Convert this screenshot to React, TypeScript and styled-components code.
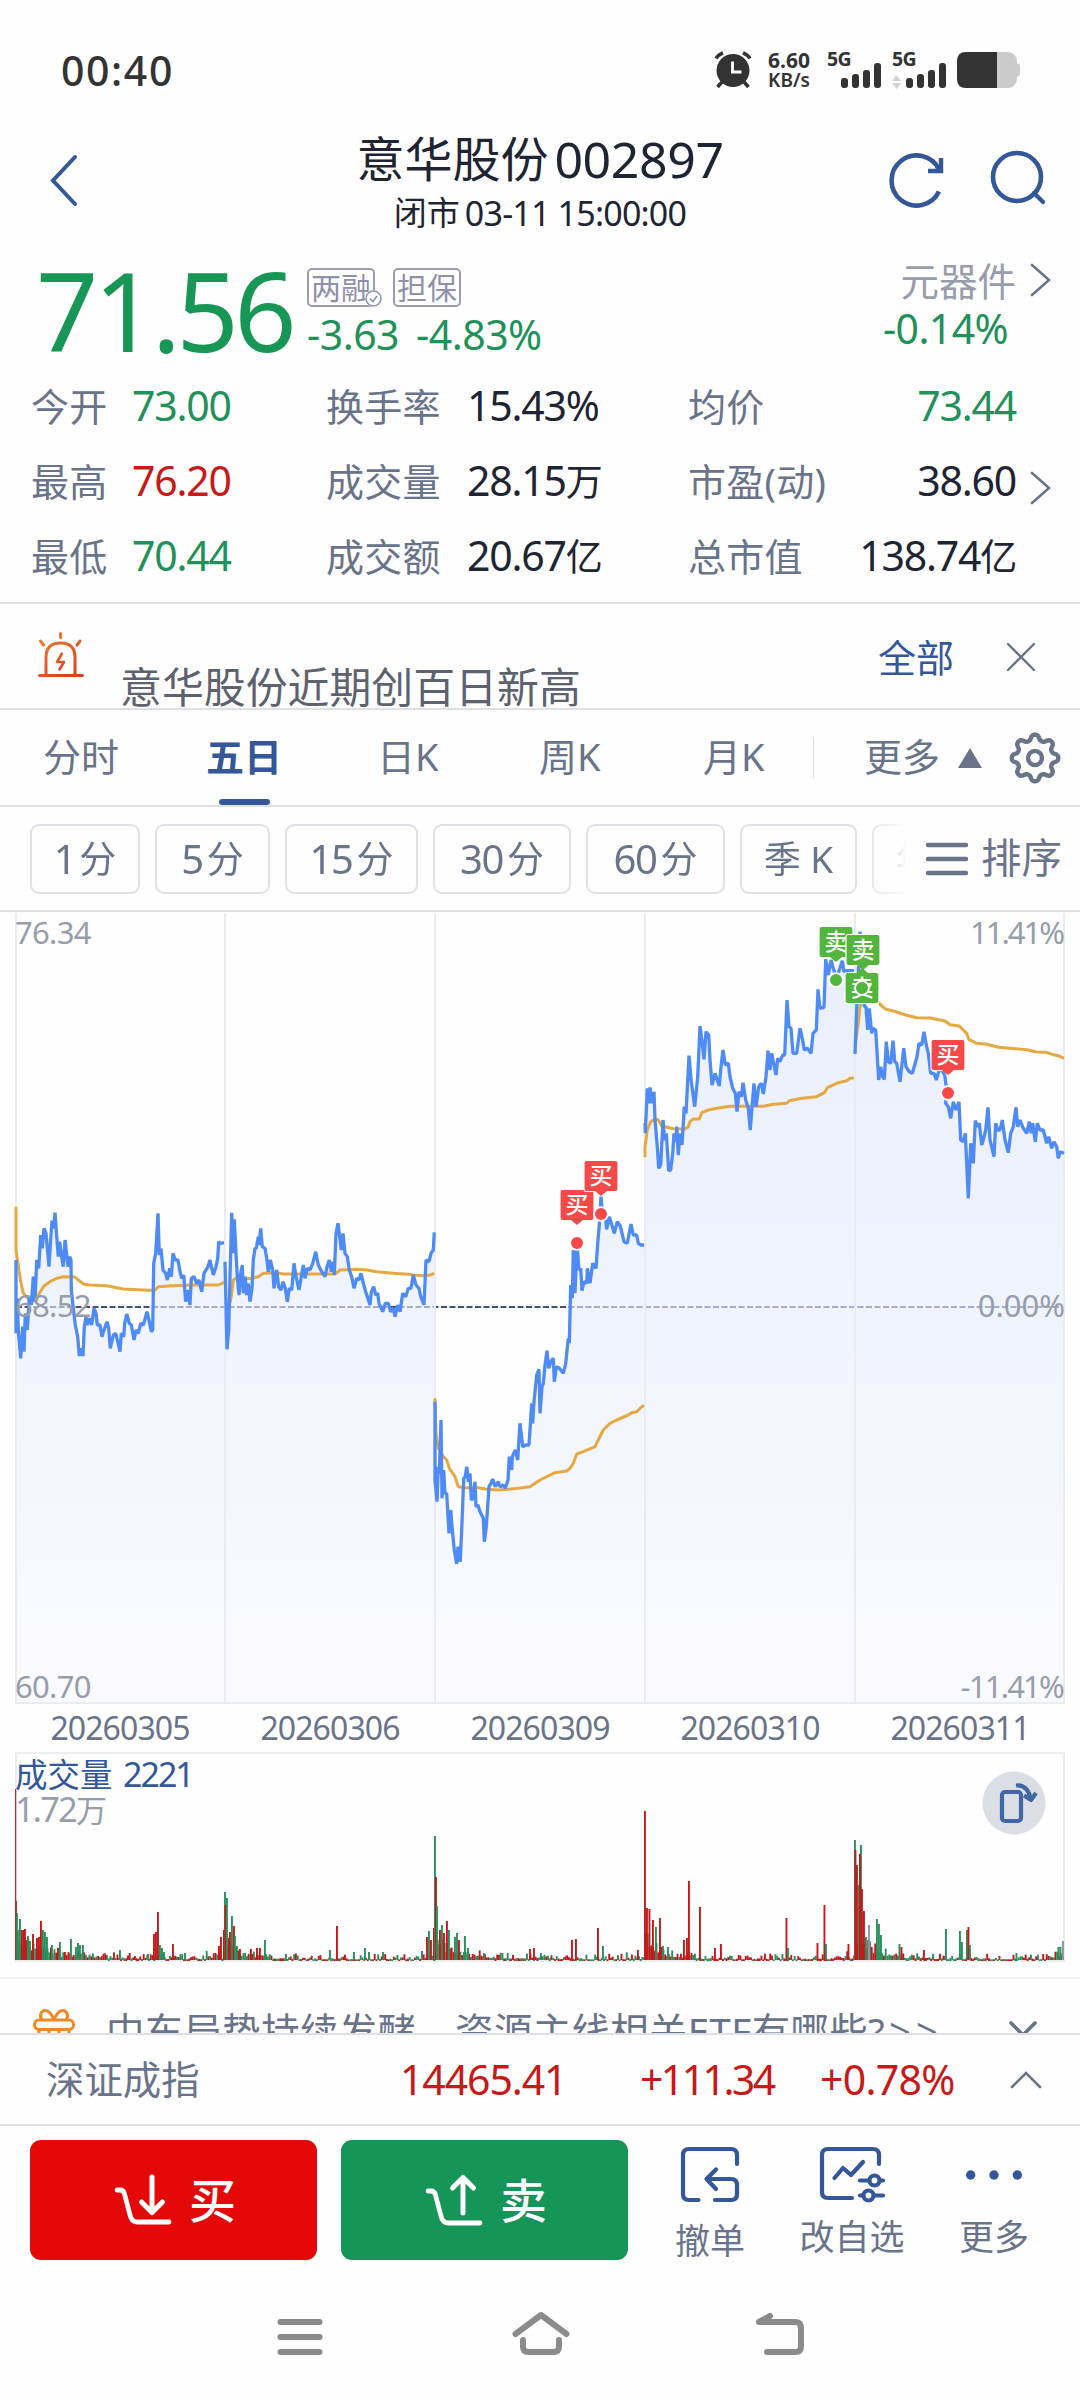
import React from "react";
import styled, { createGlobalStyle } from "styled-components";

const c = {
  ink: "#1f2433",
  slate: "#69738a",
  mute: "#979dab",
  blue: "#335798",
  green: "#21915a",
  red: "#c91818",
  line: "#dfe0e3",
  status: "#333333",
};

const Global = createGlobalStyle`
  * { box-sizing: border-box; }
  body { margin: 0; background: #fefefe; }
  svg { display: block; flex: none; overflow: visible; }
`;

const Screen = styled.main`
  width: 1080px;
  height: 2400px;
  display: flex;
  flex-direction: column;
  overflow: hidden;
  background: #fefefe;
  color: ${c.ink};
  font-family: "Noto Sans", "Noto Sans CJK SC", sans-serif;
  line-height: 1;
  white-space: nowrap;
`;

/* ---------- status bar ---------- */
const StatusBar = styled.header`
  height: 120px;
  padding: 20px 60px 0 61px;
  display: flex;
  align-items: center;
  justify-content: space-between;
  color: ${c.status};
`;
const Clock = styled.span`
  font-size: 41px;
  font-weight: 500;
  letter-spacing: 1.6px;
`;
const StatusIcons = styled.div`
  display: flex;
  align-items: center;
`;
const Speed = styled.div`
  width: 48px;
  margin: 0 14px 0 13px;
  text-align: center;
  font-weight: 700;
  font-size: 21px;
  line-height: 21px;
`;
const SpeedUnit = styled.div`
  font-size: 19px;
  line-height: 19px;
  font-weight: 600;
`;

/* ---------- title bar ---------- */
const TitleBar = styled.div`
  height: 130px;
  padding: 0 33px 0 49px;
  display: grid;
  grid-template-columns: 142px 1fr 158px;
`;
const BackSlot = styled.div`
  padding-top: 35px;
`;
const Titles = styled.div`
  display: flex;
  flex-direction: column;
  align-items: center;
  padding: 11px 0 0 0;
`;
const Title = styled.h1`
  margin: 0;
  height: 56px;
  font-size: 48px;
  line-height: 56px;
  font-weight: 400;
  display: flex;
  gap: 6px;
`;
const Subtitle = styled.div`
  height: 52px;
  font-size: 33px;
  line-height: 52px;
  display: flex;
  gap: 5px;
`;
const Latin = styled.span<{ $size: number; $ls?: number }>`
  font-size: ${(p) => p.$size}px;
  letter-spacing: ${(p) => p.$ls ?? 0}px;
`;
const HeadActions = styled.div`
  display: flex;
  justify-content: space-between;
  padding-top: 30px;
`;

/* ---------- quote ---------- */
const Quote = styled.section`
  height: 118px;
  padding: 0 28px 0 36px;
  display: grid;
  grid-template-columns: 271px 1fr auto;
`;
const Price = styled.div`
  color: #179656;
  font-size: 109px;
  line-height: 119px;
  font-weight: 400;
  letter-spacing: -4.5px;
`;
const Change = styled.div`
  display: flex;
  flex-direction: column;
  padding-top: 18px;
`;
const Badges = styled.div`
  display: flex;
  gap: 18px;
`;
const Badge = styled.span`
  position: relative;
  height: 39px;
  width: 68px;
  border: 2px solid #9a9cb4;
  border-radius: 5px;
  color: #8f91ab;
  font-size: 30px;
  line-height: 35px;
  text-align: center;
`;
const BadgeTick = styled.span`
  position: absolute;
  right: -9px;
  bottom: -2px;
  border-radius: 50%;
  background: #fefefe;
`;
const Deltas = styled.div`
  display: flex;
  gap: 17px;
  margin-top: 6px;
  font-size: 41px;
  line-height: 42px;
  color: ${c.green};
  letter-spacing: -0.5px;
`;
const Sector = styled.div`
  display: flex;
  gap: 14px;
  padding-top: 10px;
`;
const SectorText = styled.div`
  display: flex;
  flex-direction: column;
  align-items: flex-end;
  color: ${c.mute};
  font-size: 38.5px;
  line-height: 42px;
`;
const SectorDelta = styled.div`
  margin: 5px 8px 0 0;
  font-size: 41px;
  line-height: 42px;
  letter-spacing: -0.6px;
  color: ${c.green};
`;
const SectorChevron = styled.div`
  padding-top: 3px;
`;

/* ---------- stats ---------- */
const Stats = styled.section`
  height: 236px;
  padding: 0 28px 0 31px;
  display: grid;
  grid-template-columns: 101px 194px 141px 221px 150px 1fr 36px;
  grid-template-rows: repeat(3, 75px);
  align-items: center;
  border-bottom: 2px solid ${c.line};
`;
const StatLabel = styled.span`
  color: ${c.slate};
  font-size: 38px;
  letter-spacing: 0.3px;
`;
const StatValue = styled.span<{ $color?: string; $end?: boolean }>`
  color: ${(p) => p.$color ?? c.ink};
  font-size: 41px;
  letter-spacing: -1.2px;
  text-align: ${(p) => (p.$end ? "right" : "left")};
`;
const Unit = styled.span`
  font-size: 37px;
`;
const StatTail = styled.span`
  display: flex;
  justify-content: flex-end;
  padding-top: 15px;
`;

/* ---------- alert strip ---------- */
const Alert = styled.section`
  height: 106px;
  padding: 0 44px 0 36px;
  display: flex;
  border-bottom: 2px solid ${c.line};
`;
const AlertIcon = styled.div`
  padding-top: 27px;
  width: 84px;
`;
const AlertText = styled.div`
  flex: 1;
  padding-top: 61px;
  font-size: 41.9px;
  line-height: 44px;
  color: #5d626e;
  overflow: hidden;
`;
const AlertAll = styled.div`
  padding-top: 31px;
  width: 128px;
  font-size: 38px;
  line-height: 44px;
  color: ${c.blue};
`;
const AlertClose = styled.div`
  padding-top: 38px;
`;

/* ---------- tabs ---------- */
const Tabs = styled.nav`
  height: 97px;
  padding-left: 43px;
  display: grid;
  grid-template-columns: 163px 171px 162px 164px 110px 51px 94px 50px 1fr;
  align-items: center;
  border-bottom: 2px solid ${c.line};
  color: ${c.slate};
  font-size: 38px;
`;
const Tab = styled.span<{ $active?: boolean }>`
  height: 95px;
  line-height: 93px;
  display: flex;
  flex-direction: column;
  width: max-content;
  color: ${(p) => (p.$active ? c.blue : "inherit")};
  font-weight: ${(p) => (p.$active ? 700 : 400)};
  &::after {
    content: "";
    display: ${(p) => (p.$active ? "block" : "none")};
    flex: none;
    width: 51px;
    height: 6px;
    margin: -4px auto 0;
    border-radius: 3px;
    background: ${c.blue};
  }
`;
const Divider = styled.i`
  width: 1px;
  height: 42px;
  background: ${c.line};
`;

/* ---------- period chips ---------- */
const Periods = styled.section`
  height: 105px;
  padding-left: 30px;
  display: flex;
  align-items: center;
  border-bottom: 2px solid ${c.line};
  color: ${c.slate};
`;
const ChipTrack = styled.div`
  width: 876px;
  display: flex;
  gap: 15px;
  overflow: hidden;
  mask-image: linear-gradient(90deg, #000 834px, transparent 876px);
`;
const Chip = styled.span<{ $w: number }>`
  flex: none;
  width: ${(p) => p.$w}px;
  height: 70px;
  border: 2px solid #dfe1e6;
  border-radius: 9px;
  display: flex;
  align-items: center;
  justify-content: center;
  gap: 4px;
  font-size: 37px;
`;
const Sort = styled.div`
  display: flex;
  align-items: center;
  gap: 13px;
  margin-left: 20px;
  font-size: 40.5px;
`;

/* ---------- charts ---------- */
const Plot = styled.figure`
  margin: 0;
  display: flex;
`;
const Dates = styled.div`
  height: 49px;
  margin: 0 15px;
  display: grid;
  grid-template-columns: repeat(5, 1fr);
  align-items: center;
  justify-items: center;
  color: ${c.slate};
  font-size: 32px;
  line-height: 46px;
  padding-bottom: 2px;
  letter-spacing: -0.9px;
`;

/* ---------- promo ---------- */
const Promo = styled.section`
  height: 58px;
  overflow: hidden;
  border-top: 2px solid #f2f3f5;
  border-bottom: 2px solid ${c.line};
  padding: 30px 43px 0 32px;
  display: flex;
  color: ${c.slate};
`;
const PromoText = styled.div`
  flex: 1;
  padding-left: 29px;
  font-size: 38.4px;
  line-height: 44px;
  letter-spacing: 0.4px;
`;
const PromoArrows = styled.span`
  letter-spacing: 5px;
  margin-left: 4px;
`;
const PromoChevron = styled.div`
  padding-top: 12px;
`;

/* ---------- index row ---------- */
const IndexRow = styled.section`
  height: 91px;
  padding: 0 38px 0 46px;
  display: grid;
  grid-template-columns: 354px 240px 180px 1fr auto;
  align-items: center;
  border-bottom: 2px solid ${c.line};
  color: ${c.red};
  font-size: 41px;
`;
const IndexName = styled.span`
  color: ${c.slate};
  font-size: 38.4px;
`;

/* ---------- trade bar ---------- */
const TradeBar = styled.footer`
  height: 149px;
  padding: 14px 0 0 30px;
  display: flex;
  gap: 24px;
`;
const TradeButton = styled.button<{ $bg: string }>`
  width: 287px;
  height: 120px;
  padding: 0 0 0 3px;
  border: 0;
  border-radius: 11px;
  background: ${(p) => p.$bg};
  color: #fff;
  font: 500 47px/1 "Noto Sans", "Noto Sans CJK SC", sans-serif;
  display: flex;
  align-items: center;
  justify-content: center;
  gap: 17px;
`;
const Tools = styled.div`
  flex: 1;
  margin-left: -2px;
  display: grid;
  grid-template-columns: 120px 164px 120px;
`;
const Tool = styled.div<{ $shift?: number }>`
  display: flex;
  flex-direction: column;
  align-items: center;
  padding-top: 6px;
  gap: ${(p) => 15 + (p.$shift ?? 0)}px;
  color: ${c.slate};
  font-size: 35px;
`;

/* ---------- system navigation ---------- */
const SystemNav = styled.nav`
  flex: 1;
  padding: 34px 271px 0 272px;
  display: flex;
  align-items: flex-start;
  justify-content: space-between;
`;

const Chevron = ({ d, w, h, sw = 2.6, color = c.slate }: { d: string; w: number; h: number; sw?: number; color?: string }) => (
  <svg width={w} height={h} viewBox={`0 0 ${w} ${h}`} fill="none" stroke={color} strokeWidth={sw} strokeLinecap="round">
    <path d={d} />
  </svg>
);

const Signal = ({ arrows }: { arrows?: boolean }) => (
  <svg width="65" height="40" viewBox="0 0 65 40" fill={c.status}>
    <text x="0" y="15.5" fontSize="19.5" fontWeight="700" letterSpacing="-0.6">5G</text>
    <rect x="14" y="28" width="7" height="10" rx="3" />
    <rect x="25" y="24" width="7" height="14" rx="3" />
    <rect x="36" y="20" width="7" height="18" rx="3" />
    <rect x="47" y="13" width="7" height="25" rx="3" />
    {arrows && <path d="M0 31L4.500 25L9 31zM0 33h9L4.500 39z" fill="#d2d2d2" />}
  </svg>
);

const gearPath = (() => {
  const pts: string[] = [];
  for (let i = 0; i < 160; i++) {
    const a = (i / 160) * Math.PI * 2;
    const r = 20.6 + 3 * Math.tanh(1.4 * Math.cos(8 * a));
    pts.push(`${(27 + r * Math.cos(a)).toFixed(2)} ${(27 + r * Math.sin(a)).toFixed(2)}`);
  }
  return "M" + pts.join("L") + "Z";
})();

/* Each session stores its trace in thirds of a pixel from its own origin. */
type Session = { ox: number; oy: number; price: string; avg: string };
const sessions: Session[] = [
  {
    ox: 0, oy: 900,
    price: "48,1080 48,1300 52,1195 55,1290 62,1375 68,1280 72,1355 76,1240 82,1290 88,1190 94,1215 100,1130 105,1205 110,1080 116,1105 122,1005 127,1045 132,985 138,1000 147,1100 151,1035 156,962 161,985 165,938 170,1010 175,1070 179,1025 184,1065 190,1100 195,1020 200,1065 204,1100 209,1070 213,1080 214,1170 220,1225 226,1275 233,1310 238,1368 243,1345 249,1368 253,1280 258,1250 262,1275 268,1255 275,1275 282,1225 288,1240 292,1275 300,1275 306,1310 312,1290 321,1265 326,1285 331,1345 340,1305 347,1300 353,1325 360,1355 364,1300 371,1310 374,1270 380,1242 388,1270 394,1275 402,1320 408,1290 415,1300 422,1270 430,1275 441,1235 448,1265 454,1295 458,1290 461,1090 467,1060 474,940 478,1065 483,1045 489,1110 497,1120 502,1140 509,1105 514,1130 519,1060 526,1080 534,1080 540,1115 545,1135 551,1125 557,1205 564,1170 570,1215 574,1135 582,1130 590,1150 597,1140 605,1175 612,1120 618,1110 624,1100 630,1080 640,1125 648,1100 653,1075 656,1025 661,1030 672,1028",
    avg: "48,920 48,1050 56,1105 62,1145 70,1180 80,1190 92,1205 110,1200 118,1180 132,1158 150,1145 170,1135 190,1130 225,1131 235,1140 252,1153 270,1155 320,1157 370,1167 445,1171 465,1171 475,1160 515,1157 580,1155 655,1155 672,1147",
  },
  {
    ox: 0, oy: 900,
    price: "675,1085 681,1348 686,1290 690,1130 695,938 700,1060 703,958 708,1060 712,1130 717,1185 722,1120 727,1095 730,1180 736,1130 740,1185 745,1150 750,1205 756,1165 760,1080 765,1045 769,1045 775,1010 777,1035 782,985 787,1040 795,1045 800,1075 805,1115 811,1080 818,1110 822,1165 830,1110 836,1160 843,1170 849,1145 856,1165 862,1205 868,1165 875,1170 882,1090 888,1130 897,1170 903,1135 910,1095 915,1135 922,1105 930,1110 938,1090 947,1055 955,1095 965,1115 975,1130 981,1100 988,1080 994,1115 1000,1085 1003,1125 1008,1000 1014,970 1019,1010 1024,1050 1029,1000 1035,1060 1042,1070 1048,1110 1055,1130 1062,1165 1070,1135 1077,1140 1083,1120 1090,1150 1097,1175 1110,1215 1114,1175 1121,1160 1127,1185 1133,1180 1137,1210 1148,1235 1156,1210 1165,1210 1172,1235 1180,1225 1185,1250 1193,1215 1200,1235 1208,1180 1217,1190 1225,1165 1233,1165 1240,1125 1248,1155 1257,1165 1262,1190 1272,1215 1278,1080 1287,1085 1293,1060 1300,1050 1303,997",
    avg: "690,1210 695,1180 700,1140 710,1133 750,1136 775,1130 790,1120 830,1118 850,1122 920,1122 1005,1122 1020,1110 1070,1108 1100,1110 1130,1115 1180,1120 1225,1123 1240,1125 1270,1127 1290,1125 1303,1120",
  },
  {
    ox: 420, oy: 1100,
    price: "45,905 45,1140 51,1205 55,1100 58,1120 63,960 66,1195 71,1110 75,1180 80,1180 87,1300 92,1230 97,1290 103,1350 110,1392 114,1340 121,1385 127,1245 131,1135 136,1130 140,1100 145,1145 150,1120 154,1200 160,1195 165,1145 168,1220 174,1215 180,1235 190,1255 193,1325 199,1280 207,1160 213,1150 218,1137 226,1160 235,1145 240,1160 250,1155 256,1165 264,1140 268,1070 275,1110 277,1070 286,1050 293,1080 300,970 308,1040 317,1035 327,1035 335,910 338,970 342,905 350,825 357,808 360,940 366,860 370,850 375,795 381,752 386,805 392,785 400,775 403,845 409,800 418,805 430,820 437,790 445,715 448,730 452,555 457,595 460,450 465,580 471,430 477,510 482,505 486,572 492,545 500,550 502,505 510,550 518,490 528,505 533,430 538,375 543,290 548,350 555,340 560,388 568,350 574,370 583,400 592,365 601,378 612,425 622,430 633,372 640,405 650,405 655,430 663,435 672,435",
    avg: "45,895 48,1000 55,1045 70,1070 80,1080 88,1105 105,1130 115,1160 135,1163 175,1163 200,1168 235,1170 265,1168 300,1164 330,1160 360,1140 405,1118 440,1113 450,1105 460,1090 470,1062 490,1055 525,1040 535,1020 550,990 570,970 590,960 625,945 635,938 650,935 665,920 672,917",
  },
  {
    ox: 630, oy: 900,
    price: "45,670 46,700 52,565 58,610 60,562 65,610 72,575 75,660 82,740 86,805 92,795 99,660 104,720 109,700 116,812 122,810 128,760 132,700 138,725 140,680 145,765 150,700 156,735 163,620 168,640 177,467 184,545 194,620 203,530 210,378 217,430 222,478 228,395 236,405 240,480 246,555 255,520 268,558 273,500 279,450 286,495 295,490 300,530 308,565 316,580 321,635 327,575 334,590 339,548 347,600 355,625 361,690 366,620 372,550 378,620 386,560 394,550 400,582 408,530 414,452 420,510 425,460 438,525 443,475 450,485 458,465 464,465 471,300 477,380 483,385 489,460 500,460 510,385 517,415 523,450 532,445 543,460 549,400 559,390 564,268 570,325 582,322 587,178 595,225 603,180 610,205 618,230 626,215 637,182 642,215 652,212 672,212",
    avg: "45,772 45,740 52,690 62,665 75,657 85,660 95,678 130,686 165,687 175,680 180,665 190,657 208,657 215,638 235,630 265,624 300,619 400,619 430,613 470,610 478,602 515,595 560,590 583,578 592,563 625,548 650,542 660,535 672,534",
  },
  {
    ox: 630, oy: 900,
    price: "675,462 681,300 690,95 697,200 703,320 708,320 713,390 718,325 725,400 730,385 737,390 741,455 746,540 752,500 758,530 763,538 769,425 775,485 782,490 789,422 794,485 800,490 810,545 815,500 821,445 828,500 838,515 847,520 854,495 861,470 867,430 875,435 882,395 889,435 895,460 902,520 912,520 919,540 930,500 944,525 949,560 947,610 955,620 962,655 970,605 978,630 987,605 992,720 1000,725 1006,700 1015,895 1022,730 1030,790 1036,662 1043,680 1048,670 1055,735 1060,720 1067,690 1074,622 1080,720 1085,740 1092,770 1097,670 1103,690 1110,690 1117,660 1125,720 1135,758 1142,700 1150,680 1158,622 1163,680 1170,660 1180,685 1190,700 1198,665 1204,700 1208,670 1216,725 1222,670 1230,690 1240,690 1250,730 1256,710 1265,745 1272,725 1280,740 1285,775 1290,755 1302,760",
    avg: "678,420 685,370 690,320 700,270 745,305 752,315 768,328 790,333 830,346 860,353 900,354 945,363 960,374 988,378 1000,390 1010,400 1016,418 1040,430 1070,433 1105,442 1190,449 1220,456 1248,457 1270,464 1285,467 1302,475",
  },
];
const PLOT_TOP = 912;
const trace = (s: Session, raw: string) =>
  raw.split(" ").map((p) => {
    const [x, y] = p.split(",").map(Number);
    return [s.ox + x / 3, s.oy + y / 3 - PLOT_TOP] as const;
  });
const toPath = (pts: (readonly [number, number])[]) =>
  "M" + pts.map(([x, y]) => `${x.toFixed(1)} ${y.toFixed(1)}`).join("L");

const GRID_X = [16, 225, 435, 645, 855, 1064];

const Marker = ({ x, y, dot, kind, up }: { x: number; y: number; dot?: number; kind: "买" | "卖"; up?: boolean }) => {
  const fill = kind === "买" ? "#f74a48" : "#52b53c";
  const t = y - PLOT_TOP;
  const tip = up ? `M${x - 6} ${t - 15}l6 -5l6 5z` : `M${x - 6} ${t + 15}l6 5l6 -5z`;
  return (
    <g>
      <rect x={x - 17} y={t - 15.500} width="34" height="31" rx="2.5" fill={fill} stroke="#fff" strokeWidth="1.2" />
      <path d={tip} fill={fill} />
      <text x={x} y={t + 8} fontSize="23" fontWeight="500" fill="#fff" textAnchor="middle">{kind}</text>
      {dot && <circle cx={x} cy={dot - PLOT_TOP} r="6.900" fill={fill} stroke="#fff" strokeWidth="1.8" />}
    </g>
  );
};

const PriceChart = () => (
  <svg width="1080" height="792" viewBox="0 0 1080 792">
    <defs>
      <linearGradient id="area" x1="0" y1="0" x2="0" y2="792" gradientUnits="userSpaceOnUse">
        <stop offset="0" stopColor="rgb(219,229,249)" />
        <stop offset="0.5" stopColor="rgb(230,236,251)" />
        <stop offset="0.9" stopColor="rgb(246,247,254)" />
      </linearGradient>
    </defs>
    <line x1="16" x2="1065" y1="395" y2="395" stroke="#40527c" strokeWidth="2" strokeDasharray="6 2.5" />
    {sessions.map((s, i) => {
      const p = trace(s, s.price);
      return (
        <path key={i} d={`${toPath(p)}V790H${p[0][0]}Z`} fill="url(#area)" fillOpacity="0.6" />
      );
    })}
    <path d={GRID_X.map((x) => `M${x} 1V791`).join("") + "M15 791H1065"} stroke="#eaecf1" strokeWidth="2" />
    {sessions.map((s, i) => (
      <g key={i} fill="none" strokeLinejoin="bevel">
        <path d={toPath(trace(s, s.avg))} stroke="#e6a942" strokeWidth="3" />
        <path d={toPath(trace(s, s.price))} stroke="#4f8bf6" strokeWidth="3.300" />
      </g>
    ))}
    <g fill={c.mute} fontSize="31" letterSpacing="-0.7">
      <text x="15" y="32">76.34</text>
      <text x="15" y="405">68.52</text>
      <text x="15" y="786">60.70</text>
      <text x="1063" y="32" textAnchor="end" letterSpacing="-2">11.41%</text>
      <text x="1065" y="405" textAnchor="end" letterSpacing="0">0.00%</text>
      <text x="1063" y="786" textAnchor="end" letterSpacing="-1.800">-11.41%</text>
    </g>
    <Marker x={577} y={1205} dot={1243} kind="买" />
    <Marker x={601} y={1176} dot={1214} kind="买" />
    <Marker x={836} y={942} dot={980} kind="卖" />
    <Marker x={862} y={988} dot={988} kind="卖" up />
    <Marker x={863} y={950} kind="卖" />
    <Marker x={948} y={1055} dot={1093} kind="买" />
  </svg>
);

/* x, height, colour of the bars that stand out of the base activity */
const spikes =
  "16,59,r 17,47,g 18,30,g 20,41,g 22,30,r 24,30,r 25,31,r 28,24,g 30,19,g 33,26,r 37,22,r 39,23,r 41,39,r 43,30,g 45,28,g 47,23,g 52,15,g 60,18,g 71,21,g 76,13,g 78,17,g 80,15,g 83,15,g 120,10,g 148,6,g 154,26,r 156,28,r 158,48,r 160,15,g 162,12,g 164,8,g 173,16,r 185,7,g 219,14,r 221,23,r 224,30,r 225,68,g 225.500,55,r 227,62,g 229,22,r 230,28,r 232,44,g 234,34,r 235,24,g 237,14,g 240,11,r 251,11,r 257,12,r 260,12,r 265,20,g 286,6,g 330,10,g 337,34,r 354,8,g 365,12,g 369,8,g 383,8,g 427,23,r 429,29,g 431,20,r 434,32,r 435,124,g 436,83,r 437,54,g 440,30,r 442,35,g 444,27,r 447,39,r 449,30,g 455,23,g 457,27,g 459,20,r 465,24,g 468,12,g 484,7,g 530,11,r 534,12,r 541,7,g 572,20,r 576,21,r 598,32,r 603,14,g 638,10,r 645,149,r 647,52,r 649.500,51,r 653,40,r 656,33,g 660,42,r 663,14,g 668,13,g 684,20,r 687,22,r 689,79,r 700,53,r 715,12,r 721,16,r 786.500,42,r 788,12,g 817.500,17,r 824.500,55,r 826,16,g 848.500,16,r 855,120,g 855.500,110,r 857,95,r 859,75,g 861,115,g 860,106,r 862,71,r 864,49,r 866,23,g 869,35,n 877,41,g 879,36,g 881,25,g 899.500,16,g 901.500,13,r 924,10,r 946,31,g 960,29,g 962,18,g 967,30,g 968.500,33,r 970,15,g 1016.500,7,g 1058.500,13,g 1060.500,13,g 1063,19,n"
    .split(" ")
    .map((s) => {
      const [x, h, k] = s.split(",");
      return { x: Number(x), h: Number(h), k };
    });
const tone: Record<string, string> = { r: "#c3191b", g: "#27905c", n: "#8c95a5" };

const baseBars = (() => {
  let seed = 7;
  const rnd = () => (seed = (seed * 16807) % 2147483647) / 2147483647;
  const out: { x: number; h: number; k: string }[] = [];
  for (let x = 16; x < 1064; x += 1.75) {
    const day = Math.min(4, Math.floor((x - 15) / 210));
    const t = x - GRID_X[day];
    const peak = [24, 26, 30, 34, 36][day] * Math.exp(-t / [38, 16, 22, 15, 20][day]);
    const tail = t > 190 ? 4 : 0;
    const roll = rnd();
    const h = peak * (0.35 + 0.65 * rnd()) + roll * roll * roll * 6 + tail * rnd() + 0.6;
    out.push({ x, h, k: rnd() > 0.5 ? "r" : "g" });
  }
  return out;
})();

const VolumeChart = () => (
  <svg width="1080" height="224" viewBox="0 0 1080 224">
    <path d="M15 0H1065M16 0V207M1064 0V207M15 208H1065" stroke="#ebecef" strokeWidth="2" fill="none" />
    {[...baseBars, ...spikes].map((b, i) => (
      <rect key={i} x={b.x - 1} y={207 - b.h} width="1.9" height={b.h + (b.h < 2 ? 1 : 0)} fill={tone[b.k]} />
    ))}
    <rect x="15" y="36" width="1.2" height="171" fill="#b32a2c" />
    <text x="15" y="34" fontSize="32.5" fill={c.blue}>成交量</text>
    <text x="123" y="34" fontSize="34" fill={c.blue} letterSpacing="-2">2221</text>
    <text x="15" y="69" fontSize="34" fill={c.mute} letterSpacing="-1.600">1.72<tspan fontSize="31">万</tspan></text>
    <circle cx="1014" cy="50" r="31.500" fill="#dcdee5" />
    <g fill="none" stroke="#4267a6" strokeWidth="4.200" strokeLinejoin="round">
      <rect x="1002" y="39" width="19" height="29" rx="3" />
      <path d="M1016 32.500Q1027 31 1031 46M1024 42.500L1031 47L1036 40" />
    </g>
  </svg>
);

const stats: [string, string, string, string?][][] = [
  [["今开", "73.00", "", c.green], ["换手率", "15.43%", ""], ["均价", "73.44", "", c.green]],
  [["最高", "76.20", "", c.red], ["成交量", "28.15", "万"], ["市盈(动)", "38.60", ""]],
  [["最低", "70.44", "", c.green], ["成交额", "20.67", "亿"], ["总市值", "138.74", "亿"]],
];

export default function App() {
  return (
    <Screen>
      <Global />
      <StatusBar>
        <Clock>00:40</Clock>
        <StatusIcons>
          <svg width="38" height="38" viewBox="0 0 38 38" fill="none" stroke={c.status}>
            <path d="M2 7.500Q4 4 9 1.800M36 7.500Q34 4 29 1.800M8 31L3.500 36M30 31l4.500 5" strokeWidth="3.500" />
            <circle cx="19" cy="19.500" r="16.500" fill={c.status} stroke="none" />
            <path d="M18.500 10.500V21H27.500" stroke="#fff" strokeWidth="2.800" />
          </svg>
          <Speed>
            6.60
            <SpeedUnit>KB/s</SpeedUnit>
          </Speed>
          <Signal />
          <Signal arrows />
          <svg width="63" height="36" viewBox="0 0 63 36">
            <rect x="0" y="0" width="60" height="36" rx="9" fill="#cbcbcb" />
            <rect x="57" y="11.500" width="6" height="13" rx="3" fill="#cbcbcb" />
            <path d="M9 0H40V36H9Q0 36 0 27V9Q0 0 9 0Z" fill={c.status} />
          </svg>
        </StatusIcons>
      </StatusBar>

      <TitleBar>
        <BackSlot>
          <Chevron w={30} h={52} sw={4} color={c.blue} d="M26 2L4 25.500L26 49" />
        </BackSlot>
        <Titles>
          <Title>意华股份<Latin $size={50} $ls={-0.4}>002897</Latin></Title>
          <Subtitle>闭市<Latin $size={34} $ls={-0.8}>03-11 15:00:00</Latin></Subtitle>
        </Titles>
        <HeadActions>
          <svg width="56" height="60" viewBox="0 0 56 60" fill="none" stroke={c.blue} strokeWidth="4.600">
            <path d="M50 41.500A25 25 0 1 1 50 19.500" />
            <path d="M52 8V21H39" strokeWidth="4.400" />
          </svg>
          <svg width="57" height="60" viewBox="0 0 57 60" fill="none" stroke={c.blue} strokeWidth="4.600">
            <circle cx="27" cy="27" r="24" />
            <path d="M44 43L53 52" strokeLinecap="round" strokeWidth="4.200" />
          </svg>
        </HeadActions>
      </TitleBar>

      <Quote>
        <Price>71.56</Price>
        <Change>
          <Badges>
            <Badge>
              两融
              <BadgeTick>
                <svg width="17" height="17" viewBox="0 0 17 17" fill="none" stroke="#8f91ab" strokeWidth="1.500">
                  <circle cx="8.500" cy="8.500" r="7.500" />
                  <path d="M5 8.500L8 11.500L12 6" />
                </svg>
              </BadgeTick>
            </Badge>
            <Badge>担保</Badge>
          </Badges>
          <Deltas>
            <span>-3.63</span>
            <span>-4.83%</span>
          </Deltas>
        </Change>
        <Sector>
          <SectorText>
            元器件
            <SectorDelta>-0.14%</SectorDelta>
          </SectorText>
          <SectorChevron>
            <Chevron w={22} h={34} d="M2 2L19 17L2 32" />
          </SectorChevron>
        </Sector>
      </Quote>

      <Stats>
        {stats.map((row, r) => (
          <React.Fragment key={r}>
            {row.map(([label, value, unit, color], i) => (
              <React.Fragment key={label}>
                <StatLabel>{label}</StatLabel>
                <StatValue $color={color} $end={i === 2}>
                  {value}
                  {unit && <Unit>{unit}</Unit>}
                </StatValue>
              </React.Fragment>
            ))}
            <StatTail>{r === 1 && <Chevron w={22} h={34} d="M2 2L19 17L2 32" />}</StatTail>
          </React.Fragment>
        ))}
      </Stats>

      <Alert>
        <AlertIcon>
          <svg width="50" height="48" viewBox="0 0 50 48" fill="none" stroke="url(#siren)" strokeWidth="3" strokeLinecap="round">
            <defs>
              <linearGradient id="siren" x1="0" y1="0" x2="30" y2="48" gradientUnits="userSpaceOnUse">
                <stop offset="0" stopColor="#f08a35" />
                <stop offset="1" stopColor="#dd3f1c" />
              </linearGradient>
            </defs>
            <path d="M24.500 2.500L24.510 6.500M4.500 10L7.500 14M44 10L41 14M3.500 44.500L46.500 44.600M10 44V26.500Q10 12 24.500 12T39 26.500V44" />
            <path d="M26 22.500L21 31H28L23.500 38.500" strokeWidth="2.600" strokeLinejoin="round" />
          </svg>
        </AlertIcon>
        <AlertText>意华股份近期创百日新高</AlertText>
        <AlertAll>全部</AlertAll>
        <AlertClose>
          <Chevron w={30} h={30} sw={2.4} d="M2 2L28 28M28 2L2 28" />
        </AlertClose>
      </Alert>

      <Tabs>
        <Tab>分时</Tab>
        <Tab $active>五日</Tab>
        <Tab>日K</Tab>
        <Tab>周K</Tab>
        <Tab>月K</Tab>
        <Divider />
        <Tab>更多</Tab>
        <svg width="24" height="20" viewBox="0 0 24 20"><path d="M12 0L24 20H0z" fill={c.slate} /></svg>
        <svg width="54" height="54" viewBox="0 0 54 54" fill="none" stroke={c.slate} strokeWidth="4.400">
          <path d={gearPath} strokeLinejoin="round" />
          <circle cx="27" cy="27" r="7" />
        </svg>
      </Tabs>

      <Periods>
        <ChipTrack>
          {([["1", "分", 110], ["5", "分", 115], ["15", "分", 133], ["30", "分", 138], ["60", "分", 139], ["", "季 K", 117], ["", "年 K", 117]] as const).map(
            ([n, t, w]) => (
              <Chip key={n + t} $w={w}>
                {n && <Latin $size={40} $ls={-1.400}>{n}</Latin>}
                {t}
              </Chip>
            ),
          )}
        </ChipTrack>
        <Sort>
          <Chevron w={42} h={34} sw={4.4} d="M2 3H40M2 17H40M2 31H40" />
          排序
        </Sort>
      </Periods>

      <Plot><PriceChart /></Plot>
      <Dates>
        {["20260305", "20260306", "20260309", "20260310", "20260311"].map((d) => (
          <span key={d}>{d}</span>
        ))}
      </Dates>
      <Plot><VolumeChart /></Plot>

      <Promo>
        <svg width="45" height="48" viewBox="0 0 45 48" fill="none" stroke="#ef8a22" strokeWidth="3">
          <path d="M22 11C19 3 16 1 12.500 1.500S7 7 10 11M22 11C25 3 28 1 31.500 1.500S37 7 34 11" />
          <rect x="2.500" y="11" width="39" height="9.500" rx="4.500" />
          <path d="M7 21V44H37V21M17 21V44M27 21V44" />
        </svg>
        <PromoText>中东局势持续发酵，资源主线相关ETF有哪些?<PromoArrows>&gt;&gt;</PromoArrows></PromoText>
        <PromoChevron>
          <Chevron w={28} h={18} sw={3.6} d="M2 2L14 14L26 2" />
        </PromoChevron>
      </Promo>

      <IndexRow>
        <IndexName>深证成指</IndexName>
        <Latin $size={41} $ls={-1.100}>14465.41</Latin>
        <Latin $size={41} $ls={-2.600}>+111.34</Latin>
        <Latin $size={41} $ls={-0.700}>+0.78%</Latin>
        <Chevron w={32} h={18} sw={2.6} d="M2 16L16 2L30 16" />
      </IndexRow>

      <TradeBar>
        <TradeButton $bg="#e50808">
          <svg width="58" height="52" viewBox="0 0 58 52" fill="none" stroke="#fff" strokeWidth="4.800" strokeLinecap="round" strokeLinejoin="round">
            <path d="M3 16H6Q9.500 16 10.500 20L16 41Q17.500 48 23 48H55" />
            <path d="M38 3V37M27.500 28L38 38.500L48.500 28" strokeWidth="5" />
          </svg>
          买
        </TradeButton>
        <TradeButton $bg="#159558">
          <svg width="58" height="52" viewBox="0 0 58 52" fill="none" stroke="#fff" strokeWidth="4.800" strokeLinecap="round" strokeLinejoin="round">
            <path d="M3 17H6Q9.500 17 10.500 21L16 42Q17.500 49 23 49H55" />
            <path d="M38 39V5M27.500 14L38 3.500L48.500 14" strokeWidth="5" />
          </svg>
          卖
        </TradeButton>
        <Tools>
          <Tool $shift={4}>
            <svg width="60" height="58" viewBox="0 0 60 58" fill="none" stroke={c.blue} strokeWidth="4.200" strokeLinecap="round" strokeLinejoin="round">
              <path d="M57 18V9Q57 3 51 3H9Q3 3 3 9V48Q3 54 9 54H18.500M35 54H51Q57 54 57 48V39Q57 33 51 33H27M36 23.500L26.500 33L36 43" />
            </svg>
            撤单
          </Tool>
          <Tool>
            <svg width="66" height="58" viewBox="0 0 66 58" fill="none" stroke={c.blue} strokeWidth="4.200" strokeLinecap="round" strokeLinejoin="round">
              <path d="M60 18V9Q60 3 54 3H9Q3 3 3 9V46Q3 52 9 52H33M15.500 32L24 22L32 29L44 16M41 34.500H64M41 49.500H64" />
              <circle cx="55.500" cy="34.500" r="5" fill="#fefefe" />
              <circle cx="49.500" cy="49.500" r="5" fill="#fefefe" />
            </svg>
            改自选
          </Tool>
          <Tool>
            <svg width="60" height="58" viewBox="0 0 60 58" fill={c.blue}>
              <circle cx="6.700" cy="29" r="4.700" />
              <circle cx="30" cy="29" r="4.700" />
              <circle cx="53.300" cy="29" r="4.700" />
            </svg>
            更多
          </Tool>
        </Tools>
      </TradeBar>

      <SystemNav>
        <svg width="56" height="52" viewBox="0 0 56 52" stroke="#8b8b8b" strokeWidth="6" strokeLinecap="round">
          <path d="M8.500 13H47.500M8.500 28H47.500M8.500 43H47.500" />
        </svg>
        <svg width="60" height="52" viewBox="0 0 60 52" fill="none" stroke="#8b8b8b" strokeWidth="6" strokeLinecap="round" strokeLinejoin="round">
          <path d="M4.500 25L30 6L55.500 25M12 31V37.500Q12 43 17.500 43H42.500Q48 43 48 37.500V31" />
        </svg>
        <svg width="56" height="52" viewBox="0 0 56 52" fill="none" stroke="#8b8b8b" strokeWidth="6" strokeLinecap="round" strokeLinejoin="round">
          <path d="M17 7L6 13H42Q48 13 48 19V37.500Q48 43 42.500 43H14" />
        </svg>
      </SystemNav>
    </Screen>
  );
}
